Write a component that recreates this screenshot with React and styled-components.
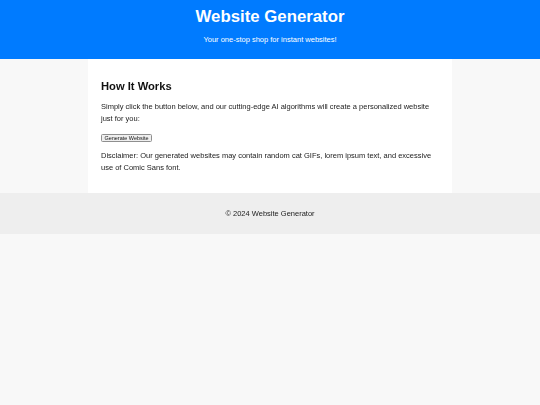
import React from "react";
import styled, { createGlobalStyle } from "styled-components";

const Global = createGlobalStyle`
  html, body { margin: 0; padding: 0; background: #f8f8f8; }
  body {
    font-family: "Liberation Sans", Arial, sans-serif;
    color: #333;
    -webkit-font-smoothing: antialiased;
  }
`;

const Header = styled.header`
  background: #007bff;
  color: #fff;
  text-align: center;
  padding: 7px 0 15px;
`;

const Title = styled.h1`
  margin: 0;
  font-size: 16.8px;
  line-height: 19px;
  font-weight: bold;
`;

const Tagline = styled.p`
  margin: 9px 0 0;
  font-size: 7.5px;
  line-height: 9px;
`;

const Main = styled.main`
  width: 338px;
  margin: 0 auto;
  background: #fff;
  padding: 21px 13px 19px;
  will-change: transform;
`;

const Heading = styled.h2`
  margin: 0;
  font-size: 11.2px;
  line-height: 13px;
  font-weight: bold;
  color: #111;
`;

const Text = styled.p`
  margin: ${(p) => p.$top}px 0 0;
  font-size: 7.5px;
  line-height: 12px;
  color: #222;
`;

const Button = styled.button`
  display: block;
  margin: 9px 0 0;
  font-family: "Liberation Sans", Arial, sans-serif;
  font-size: 5.5px;
  line-height: 6px;
  padding: 0;
  height: 8px;
  width: 51px;
  border: 1px solid #8f8f8f;
  border-radius: 1.5px;
  background: #efefef;
  color: #111;
  white-space: nowrap;
`;

const Footer = styled.footer`
  background: #eee;
  text-align: center;
  height: 41px;
  display: flex;
  align-items: center;
  justify-content: center;
  font-size: 7.5px;
  color: #222;
  will-change: transform;
`;

export default function App() {
  return (
    <>
      <Global />
      <Header>
        <Title>Website Generator</Title>
        <Tagline>Your one-stop shop for instant websites!</Tagline>
      </Header>
      <Main>
        <Heading>How It Works</Heading>
        <Text $top={8}>
          Simply click the button below, and our cutting-edge AI algorithms will create a personalized website just for you:
        </Text>
        <Button>Generate Website</Button>
        <Text $top={8}>
          Disclaimer: Our generated websites may contain random cat GIFs, lorem ipsum text, and excessive use of Comic Sans font.
        </Text>
      </Main>
      <Footer>© 2024 Website Generator</Footer>
    </>
  );
}
